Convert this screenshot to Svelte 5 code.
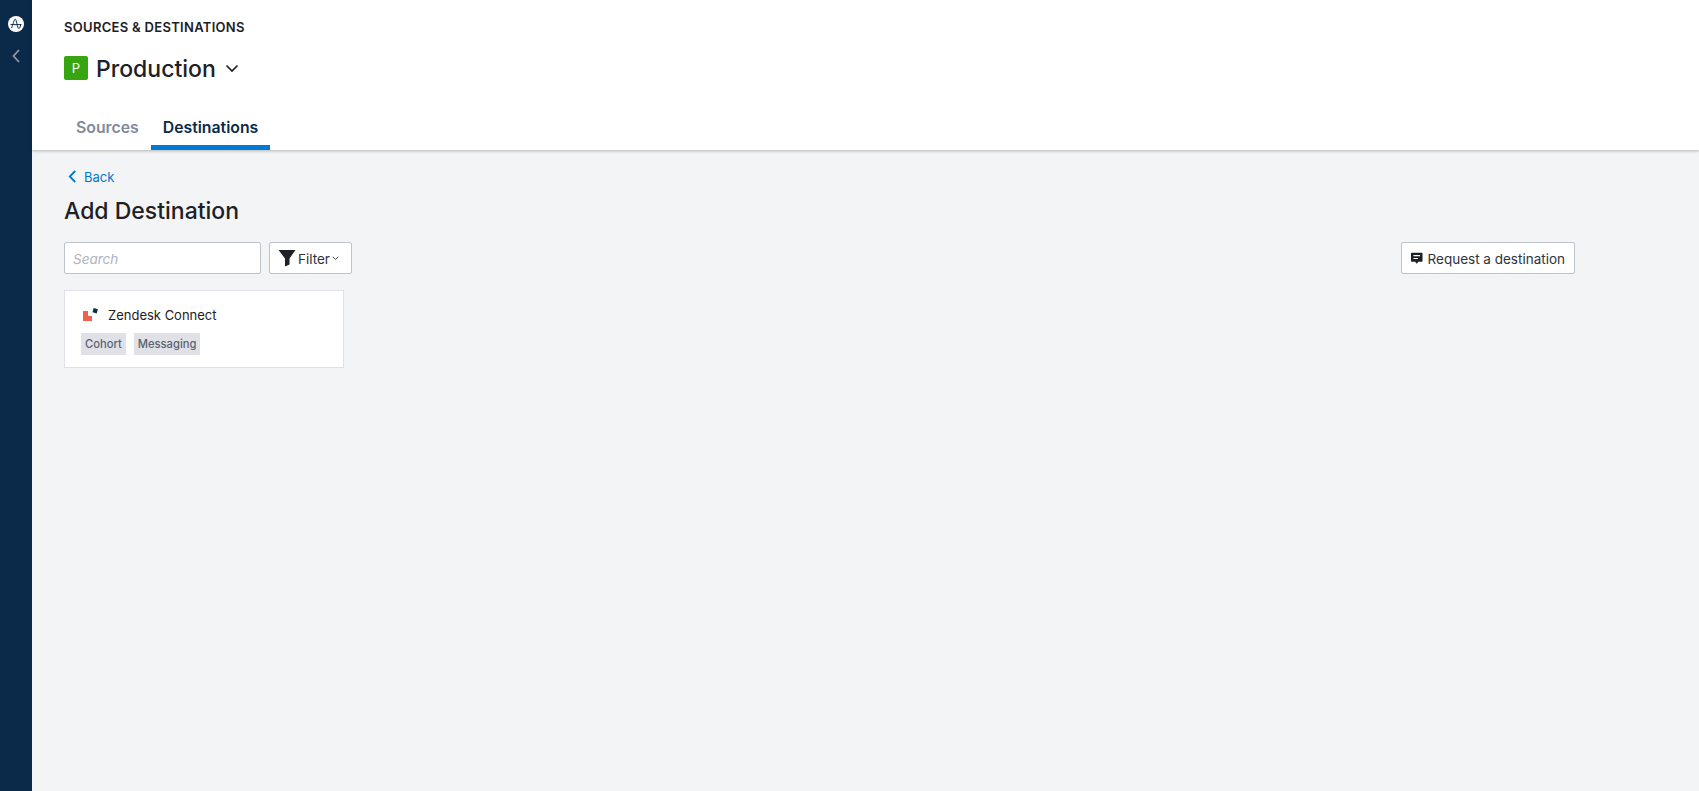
<script>
  const tabs = ['Sources', 'Destinations'];
  let active = 'Destinations';
</script>

<div class="shell">
  <nav class="rail">
    <svg class="logo" width="16" height="16" viewBox="0 0 16 16">
      <circle cx="8" cy="8" r="8" fill="#fff" />
      <path d="M2.5 8.6 H13.5 M3.5 12 C5 9 6 3.2 7.3 3.2 C8.6 3.2 9.2 12.5 10.8 12.5 C11.8 12.5 12.3 10.5 12.7 8.6" fill="none" stroke="#0b2a4a" stroke-width="1" />
    </svg>
    <svg class="collapse" width="10" height="14" viewBox="0 0 10 14">
      <path d="M8 1 L2.5 7 L8 13" fill="none" stroke="#8d99a8" stroke-width="1.8" />
    </svg>
  </nav>

  <main class="main">
    <header class="top">
      <div class="crumb">SOURCES &amp; DESTINATIONS</div>
      <div class="project">
        <span class="badge">P</span>
        <span class="project-name">Production</span>
        <svg width="14" height="9" viewBox="0 0 14 9">
          <path d="M1.5 1.5 L7 7 L12.5 1.5" fill="none" stroke="#1d2125" stroke-width="1.7" />
        </svg>
      </div>
      <div class="tabs">
        {#each tabs as tab}
          <div class="tab" class:active={tab === active}>{tab}</div>
        {/each}
      </div>
    </header>

    <section class="content">
      <a class="back" href="#back">
        <svg width="9" height="13" viewBox="0 0 9 13">
          <path d="M7.2 1 L1.8 6.5 L7.2 12" fill="none" stroke="#0079d3" stroke-width="1.8" />
        </svg>
        Back
      </a>
      <h1>Add Destination</h1>

      <div class="toolbar">
        <input class="search" placeholder="Search" />
        <button class="btn filter">
          <svg width="18" height="18" viewBox="0 0 18 18">
            <path d="M0.5 1 H17.5 L11.5 9.5 V15.5 L7 17.5 V9.5 Z" fill="#1d2125" />
          </svg>
          <span class="label">Filter</span>
          <svg width="7" height="5" viewBox="0 0 7 5">
            <path d="M0.8 0.8 L3.5 3.5 L6.2 0.8" fill="none" stroke="#424a54" stroke-width="1" />
          </svg>
        </button>
        <button class="btn request">
          <svg width="14" height="15" viewBox="0 0 14 15">
            <path d="M1 0.5 H13 A1 1 0 0 1 14 1.5 V10.5 A1 1 0 0 1 13 11.5 H9 L7 14 L5 11.5 H1 A1 1 0 0 1 0 10.5 V1.5 A1 1 0 0 1 1 0.5 Z" fill="#1d2125" />
            <path d="M3 4 H11 M3 7.5 H8.5" stroke="#fff" stroke-width="1.3" />
          </svg>
          <span class="label">Request a destination</span>
        </button>
      </div>

      <div class="card">
        <div class="card-title">
          <svg width="16" height="14" viewBox="0 0 16 14">
            <path d="M1 3 H6 V8 H10 V13 H1 Z" fill="#f1604a" />
            <rect x="11" y="0.6" width="4.4" height="4.4" fill="#03363d" transform="rotate(15 13.2 2.8)" />
          </svg>
          Zendesk Connect
        </div>
        <div class="tags">
          <span class="tag">Cohort</span>
          <span class="tag">Messaging</span>
        </div>
      </div>
    </section>
  </main>
</div>

<style>
  :global(body) {
    font-family: Inter, "Noto Sans", sans-serif;
    color: #1d2125;
    background: #f3f4f6;
  }

  .shell {
    display: flex;
    height: 791px;
    overflow: hidden;
  }

  .rail {
    width: 32px;
    flex: none;
    background: #0b2a4a;
    display: flex;
    flex-direction: column;
    align-items: center;
    padding-top: 16px;
    box-sizing: border-box;
  }

  .collapse {
    margin-top: 17px;
  }

  .main {
    flex: 1;
    min-width: 0;
  }

  .top {
    height: 150px;
    box-sizing: border-box;
    background: #fff;
    padding: 19px 0 0 32px;
    box-shadow: 0 1px 3px rgba(29, 33, 37, 0.3);
    position: relative;
    display: flex;
    flex-direction: column;
  }

  .crumb {
    font-size: 13px;
    font-weight: 600;
    line-height: 17px;
    letter-spacing: 0.3px;
  }

  .project {
    display: flex;
    align-items: center;
    margin-top: 18px;
    height: 28px;
  }

  .badge {
    width: 24px;
    height: 24px;
    border-radius: 2px;
    background: #36a510;
    color: #fff;
    font-size: 13px;
    display: flex;
    align-items: center;
    justify-content: center;
  }

  .project-name {
    font-size: 23px;
    font-weight: 500;
    line-height: 30px;
    padding-top: 1px;
    margin: 0 9px 0 8px;
  }

  .tabs {
    display: flex;
    margin: auto 0 0 0;
  }

  .tab {
    padding: 0 12px;
    height: 41px;
    box-sizing: border-box;
    line-height: 38px;
    font-size: 15.8px;
    font-weight: 600;
    color: #7f8a9b;
  }

  .tab.active {
    color: #0b2a4a;
    border-bottom: 5px solid #0079d3;
  }

  .content {
    padding: 18px 124px 0 32px;
  }

  .back {
    display: flex;
    align-items: center;
    gap: 7px;
    margin-left: 4px;
    height: 17px;
    font-size: 13px;
    color: #0079d3;
    text-decoration: none;
  }

  h1 {
    margin: 8px 0 0;
    font-size: 23px;
    font-weight: 500;
    line-height: 36px;
  }

  .toolbar {
    display: flex;
    gap: 8px;
    margin-top: 13px;
  }

  .search {
    width: 197px;
    height: 32px;
    box-sizing: border-box;
    border: 1px solid #bfc3ca;
    border-radius: 2px;
    padding: 2px 8px 0;
    font: italic 13.5px Inter, "Noto Sans", sans-serif;
    background: #fff;
  }

  .search::placeholder {
    color: #aeb3bb;
  }

  .btn {
    height: 32px;
    box-sizing: border-box;
    border: 1px solid #bfc3ca;
    border-radius: 2px;
    background: #fff;
    display: flex;
    align-items: center;
    font: 13.5px Inter, "Noto Sans", sans-serif;
    color: #2d3339;
    white-space: nowrap;
  }

  .label {
    padding-top: 2px;
  }

  .filter {
    width: 83px;
    padding: 0 8px;
    gap: 2px;
  }

  .request {
    width: 174px;
    padding: 0 9px;
    gap: 5px;
    margin-left: auto;
  }

  .card {
    width: 280px;
    height: 78px;
    box-sizing: border-box;
    margin-top: 16px;
    background: #fff;
    border: 1px solid #dfe1e6;
    padding: 14px 16px;
  }

  .card-title {
    display: flex;
    align-items: center;
    gap: 10px;
    margin-left: 1px;
    font-size: 13px;
    line-height: 20px;
  }

  .tags {
    display: flex;
    gap: 8px;
    margin-top: 8px;
  }

  .tag {
    height: 22px;
    line-height: 22px;
    padding: 0 4px;
    background: #dfe1e6;
    color: #5a6270;
    font-size: 11.2px;
    font-weight: 500;
  }
</style>
